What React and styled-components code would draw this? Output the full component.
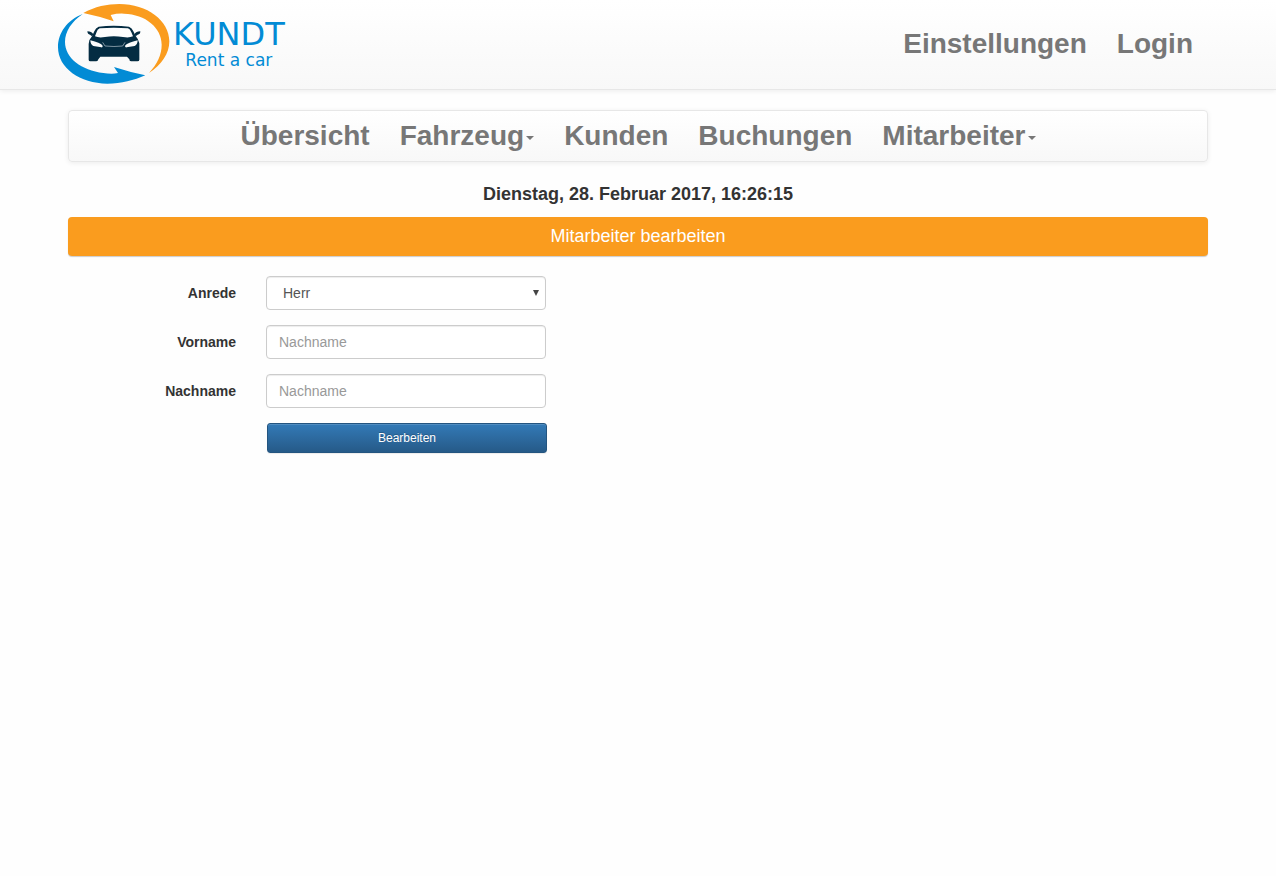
import React from 'react';
import styled, { createGlobalStyle } from 'styled-components';

const GlobalStyle = createGlobalStyle`
  * { box-sizing: border-box; }
  body {
    margin: 0;
    background: #fefefe;
    color: #333;
    font-family: "Liberation Sans", Arial, Helvetica, sans-serif;
    font-size: 14px;
    line-height: 20px;
  }
`;

const Header = styled.header`
  border-bottom: 1px solid #e7e7e7;
  background: linear-gradient(#fff, #f8f8f8);
  box-shadow: 0 1px 5px rgba(0, 0, 0, 0.075);
`;

const HeaderInner = styled.div`
  display: flex;
  justify-content: space-between;
  align-items: center;
  max-width: 1170px;
  margin: 0 auto;
  padding-right: 15px;
`;

const Brand = styled.a`
  display: flex;
  color: #028bd5;
  text-decoration: none;
`;

const BrandText = styled.span`
  display: flex;
  flex-direction: column;
  align-items: center;
  padding: 17px 0 0 2px;
`;

const BrandName = styled.span`
  font-family: "DejaVu Sans", Verdana, sans-serif;
  font-size: 32px;
  line-height: 34px;
`;

const BrandClaim = styled.span`
  font-family: "DejaVu Sans", Verdana, sans-serif;
  font-size: 17px;
  line-height: 18px;
`;

const NavList = styled.ul`
  display: flex;
  justify-content: center;
  flex-wrap: wrap;
  margin: 0;
  padding: 0;
  list-style: none;
`;

const NavLink = styled.a`
  display: flex;
  align-items: center;
  padding: ${(p) => (p.$tall ? '29px 15px 30px' : '10px 15px')};
  color: #777;
  font-size: 28px;
  font-weight: bold;
  line-height: 30px;
  text-decoration: none;
`;

const Caret = styled.span`
  margin: 4px 0 0 2px;
  border: 4px solid transparent;
  border-top-color: #777;
  border-bottom: 0;
`;

const Page = styled.main`
  max-width: 1170px;
  margin: 20px auto;
  padding: 0 15px;
`;

const MenuBar = styled.nav`
  border: 1px solid #e7e7e7;
  border-radius: 4px;
  background: linear-gradient(#fff, #f8f8f8);
  box-shadow: 0 1px 5px rgba(0, 0, 0, 0.075);
`;

const DateLine = styled.p`
  margin: 22px 0 13px;
  font-size: 18px;
  font-weight: bold;
  text-align: center;
`;

const Title = styled.h1`
  margin: 0 0 20px;
  padding: 9px 15px 10px;
  border-radius: 4px;
  background: #fa9c1e;
  box-shadow: 0 1px 1px rgba(0, 0, 0, 0.2);
  color: #fff;
  font-size: 18px;
  font-weight: normal;
  text-align: center;
`;

const Form = styled.form`
  display: grid;
  grid-template-columns: 168px 280px;
  gap: 15px 30px;
  align-items: center;
`;

const Label = styled.label`
  font-weight: bold;
  text-align: right;
`;

const controlStyle = `
  width: 100%;
  height: 34px;
  border: 1px solid #ccc;
  border-radius: 4px;
  background: #fff;
  box-shadow: inset 0 1px 1px rgba(0, 0, 0, 0.075);
  color: #555;
  font-family: inherit;
  font-size: 14px;
  line-height: 20px;
`;

const TextInput = styled.input`
  ${controlStyle}
  padding: 6px 12px;
  &::placeholder { color: #999; opacity: 1; }
`;

const SelectBox = styled.div`
  position: relative;
`;

const Select = styled.select`
  ${controlStyle}
  display: block;
  appearance: none;
  padding: 6px 16px;
`;

const SelectArrow = styled.svg`
  position: absolute;
  top: 13px;
  right: 6px;
  pointer-events: none;
`;

const SubmitButton = styled.button`
  grid-column: 2;
  height: 30px;
  margin-left: 1px;
  width: 100%;
  border: 1px solid #245580;
  border-radius: 3px;
  background: linear-gradient(#337ab7, #265a88);
  box-shadow: inset 0 1px 0 rgba(255, 255, 255, 0.15), 0 1px 1px rgba(0, 0, 0, 0.075);
  color: #fff;
  font-family: inherit;
  font-size: 12px;
  text-shadow: 0 -1px 0 rgba(0, 0, 0, 0.2);
`;

function LogoMark() {
  return (
    <svg width="118" height="89" viewBox="9 0 354 267" aria-hidden="true">
      <path
        fill="#fa9c1e"
        d="M100 39C134 20 172 12 208 12C292 12 358 62 358 124C358 160 335 195 297 219C322 191 335 164 335 134C335 83 287 43 222 41Q202 40 182 45L191 64Q145 48 100 39Z"
      />
      <path
        fill="#028bd5"
        d="M98 42C52 60 24 98 24 142C24 204 90 251 172 251C214 251 252 241 286 226Q238 216 192 201L204 219C190 222 175 221 160 219C94 211 45 174 45 126C45 94 65 65 98 42Z"
      />
      <g fill="#042c42">
        <path
          fillRule="evenodd"
          d="M146 80Q190 75 237 80Q246 83 250 94L257 108Q266 118 268 130V179Q268 184 262 184H243Q238 184 238 178L231 170H151L145 178Q144 184 139 184H121Q116 184 116 179V132Q117 118 126 109L133 94Q137 83 146 80ZM149 85Q142 88 139 98L135 109Q146 114 165 111Q191 107 219 111Q238 114 249 109L244 97Q240 87 234 85Q191 81 149 85ZM121 121Q121 133 130 138L154 142Q160 143 157 136Q151 128 121 121ZM263 121Q233 128 226 136Q223 143 230 142L254 138Q263 133 263 121Z"
        />
        <path d="M112 94Q125 94 130 103L126 109L120 104Q113 104 112 94ZM271 94Q258 94 253 103L257 109L263 104Q271 104 271 94Z" />
      </g>
      <path
        fill="none"
        stroke="#b9c6ce"
        strokeWidth="2"
        d="M158 127L165 138Q192 141 218 138L225 127"
      />
    </svg>
  );
}

const menu = [
  { label: 'Übersicht' },
  { label: 'Fahrzeug', dropdown: true },
  { label: 'Kunden' },
  { label: 'Buchungen' },
  { label: 'Mitarbeiter', dropdown: true },
];

export default function App() {
  return (
    <>
      <GlobalStyle />
      <Header>
        <HeaderInner>
          <Brand href="#">
            <LogoMark />
            <BrandText>
              <BrandName>KUNDT</BrandName>
              <BrandClaim>Rent a car</BrandClaim>
            </BrandText>
          </Brand>
          <NavList>
            <li><NavLink $tall href="#">Einstellungen</NavLink></li>
            <li><NavLink $tall href="#">Login</NavLink></li>
          </NavList>
        </HeaderInner>
      </Header>
      <Page>
        <MenuBar>
          <NavList>
            {menu.map((item) => (
              <li key={item.label}>
                <NavLink href="#">
                  {item.label}
                  {item.dropdown && <Caret />}
                </NavLink>
              </li>
            ))}
          </NavList>
        </MenuBar>
        <DateLine>Dienstag, 28. Februar 2017, 16:26:15</DateLine>
        <Title>Mitarbeiter bearbeiten</Title>
        <Form onSubmit={(e) => e.preventDefault()}>
          <Label htmlFor="anrede">Anrede</Label>
          <SelectBox>
            <Select id="anrede" defaultValue="Herr">
              <option>Herr</option>
              <option>Frau</option>
            </Select>
            <SelectArrow width="8" height="8" viewBox="0 0 8 8" aria-hidden="true">
              <path d="M1 1H7L4 7Z" fill="#444" />
            </SelectArrow>
          </SelectBox>
          <Label htmlFor="vorname">Vorname</Label>
          <TextInput id="vorname" type="text" placeholder="Nachname" />
          <Label htmlFor="nachname">Nachname</Label>
          <TextInput id="nachname" type="text" placeholder="Nachname" />
          <SubmitButton type="submit">Bearbeiten</SubmitButton>
        </Form>
      </Page>
    </>
  );
}
